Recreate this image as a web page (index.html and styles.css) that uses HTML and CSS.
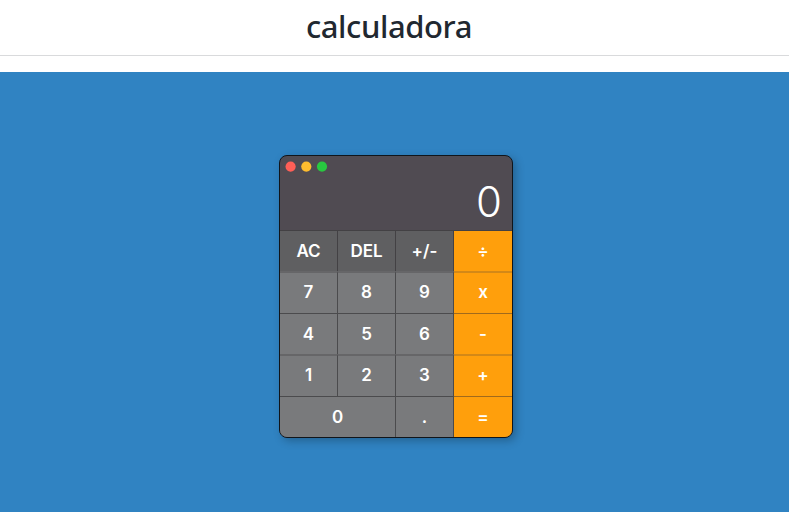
FILE: index.html
```html
<!DOCTYPE html>
<html lang="es">
<head>
<meta charset="utf-8">
<title>calculadora</title>
<link rel="stylesheet" href="styles.css">
</head>
<body>
<h1>calculadora</h1>
<main>
<section class="calculator">
<div class="display">
<svg class="dots" width="48" height="18" viewBox="0 0 48 18"><circle class="red" cx="10.6" cy="10.6" r="5.1"/><circle class="yellow" cx="26.3" cy="10.6" r="5.1"/><circle class="green" cx="42" cy="10.6" r="5.1"/></svg>
<output>0</output>
</div>
<div class="keys">
<button class="fn">AC</button><button class="fn">DEL</button><button class="fn">+/-</button><button class="op first">÷</button>
<button class="soft">7</button><button class="soft">8</button><button class="soft">9</button><button class="op soft">x</button>
<button>4</button><button>5</button><button>6</button><button class="op">-</button>
<button class="soft">1</button><button class="soft">2</button><button class="soft">3</button><button class="op soft">+</button>
<button class="wide">0</button><button>.</button><button class="op">=</button>
</div>
</section>
</main>
</body>
</html>
```
FILE: styles.css
```css
* { box-sizing: border-box; }
body { margin: 0; height: 512px; overflow: hidden; display: flex; flex-direction: column; background: #fff; font-family: Inter, sans-serif; }
h1 { margin: 0 0 16px; height: 56px; padding-right: 11px; border-bottom: 1px solid #d9dadc; font: 500 31px/52px "Noto Sans", sans-serif; letter-spacing: -.4px; text-align: center; color: #212830; }
main { flex: 1; padding: 83px 0 0 279px; background: #3083c2; }
.calculator { width: 234px; height: 283px; border: 1px solid #10151b; border-radius: 8px; overflow: hidden; background: #504b52; box-shadow: 3px 3px 8px rgba(0,0,0,.25); }
.display { height: 74px; display: flex; flex-direction: column; }
.dots { flex: none; }
.red { fill: #ff5f57; }
.yellow { fill: #febc2e; }
.green { fill: #28c840; }
output { padding-right: 10px; text-align: right; color: #fff; font-size: 42px; font-weight: 275; line-height: 56px; }
.keys { height: 207px; display: grid; grid-template-columns: repeat(4, 58px); grid-template-rows: 41px 42px 41px 42px 41px; }
button { margin: 0; padding: 0; border: 0 solid #4b4b4d; border-width: 1px 1px 0 0; background: #797a7c; color: #fff; font: 580 17px/1 Inter, sans-serif; }
.soft { border-top: 2px solid #666668; padding-bottom: 1px; }
.fn { background: #5f5f61; border-color: #434144; }
.op { background: #ff9f0c; border-color: #a16a1c; border-right-width: 0; }
.op.soft { border-top-color: #d38817; }
.op.first { border-top-color: #434144; }
.wide { grid-column: span 2; }
```
